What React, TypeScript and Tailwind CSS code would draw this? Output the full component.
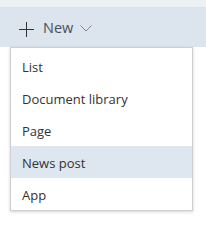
import React from "react";

const items = ["List", "Document library", "Page", "News post", "App"];

export default function App() {
  return (
    <div
      className="relative w-[206px] h-[227px] bg-white overflow-hidden"
      style={{ fontFamily: '"Open Sans", "Noto Sans", sans-serif' }}
    >
      <div className="h-[7px] bg-[#eef1f4]" />
      <div className="h-[40px] bg-[#dce4ed] flex items-center pl-[19px] text-[#333]">
        <svg width="15" height="15" viewBox="0 0 15 15" className="mt-[4px]">
          <path d="M7.5 0v15M0 7.5h15" stroke="#333" strokeWidth="1" fill="none" />
        </svg>
        <span className="ml-[9px] mt-[3px] text-[14.5px] leading-none text-[#4a5058]">New</span>
        <svg width="12" height="7" viewBox="0 0 12 7" className="ml-[7px] mt-[3px]">
          <path d="M0.5 0.5l5.5 5.5 5.5-5.5" stroke="#888" strokeWidth="1" fill="none" />
        </svg>
      </div>
      <div className="absolute left-[10px] top-[47px] w-[183px] bg-white border border-[#cfcfcf] shadow-[0_1px_3px_rgba(0,0,0,0.18)] pt-[2px]">
        {items.map((t) => (
          <div
            key={t}
            className={
              "h-[32px] flex items-center pl-[11px] pt-[4px] text-[13px] text-[#333] " +
              (t === "News post" ? "bg-[#dee6ef]" : "")
            }
          >
            {t}
          </div>
        ))}
      </div>
    </div>
  );
}
